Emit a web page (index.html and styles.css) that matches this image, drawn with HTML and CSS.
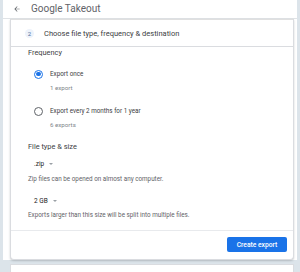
FILE: index.html
```html
<!DOCTYPE html>
<html lang="en">
<head>
  <meta charset="UTF-8" />
  <meta name="viewport" content="width=device-width, initial-scale=1.0"/>
  <title>Google Takeout</title>
  <link rel="stylesheet" href="styles.css">
</head>
<body>
  <div class="page">
    <header class="topbar">
      <svg class="back" viewBox="0 0 24 24" width="8" height="8"><path d="M20 11H7.83l5.59-5.59L12 4l-8 8 8 8 1.41-1.41L7.83 13H20v-2z" fill="#5f6368"/></svg>
      <h1>Google Takeout</h1>
    </header>

    <section class="card">
      <div class="step">
        <span class="step-num">2</span>
        <span class="step-title">Choose file type, frequency &amp; destination</span>
      </div>

      <div class="card-body">
        <h2>Frequency</h2>
        <div class="option">
          <span class="radio checked"></span>
          <div>
            <div class="opt-title">Export once</div>
            <div class="opt-sub">1 export</div>
          </div>
        </div>
        <div class="option">
          <span class="radio"></span>
          <div>
            <div class="opt-title">Export every 2 months for 1 year</div>
            <div class="opt-sub">6 exports</div>
          </div>
        </div>

        <h2 class="section-gap">File type &amp; size</h2>
        <div class="select">.zip <span class="caret"></span></div>
        <p class="hint">Zip files can be opened on almost any computer.</p>
        <div class="select select-gap">2 GB <span class="caret"></span></div>
        <p class="hint hint-tight">Exports larger than this size will be split into multiple files.</p>
      </div>

      <div class="actions">
        <button class="btn-primary">Create export</button>
      </div>
    </section>
  </div>

  <div class="next-card"></div>
</body>
</html>
```

FILE: styles.css
```css
body {
  margin: 0;
  font-family: Roboto, "Liberation Sans", Arial, sans-serif;
  background: #dce4ea;
  color: #3c4043;
  height: 272px;
  overflow: hidden;
}

.page {
  margin-left: 3px;
  width: 294px;
  background: #fff;
}

.topbar {
  display: flex;
  align-items: center;
  height: 19px;
  padding-left: 10px;
  border-bottom: 1px solid #e0e3e6;
  box-sizing: border-box;
}

.back {
  margin-right: 10px;
}

h1 {
  margin: 0;
  font-size: 10px;
  font-weight: 400;
  color: #5f6368;
  line-height: 12px;
}

.card {
  margin-left: 7px;
  width: 284px;
  box-sizing: border-box;
  border: 1px solid #dadce0;
  border-top: none;
  border-radius: 0 0 4px 4px;
  box-shadow: 0 1px 2px rgba(60, 64, 67, 0.25);
  background: #fff;
}

.step {
  display: flex;
  align-items: center;
  height: 28px;
  padding-left: 11px;
  border-top: 1px solid #e0e0e0;
  border-bottom: 1px solid #dadce0;
  box-sizing: border-box;
}

.step-num {
  width: 9px;
  height: 9px;
  border-radius: 50%;
  background: #eef3fb;
  color: #4b6d9c;
  font-size: 6px;
  line-height: 9px;
  text-align: center;
  margin-left: 3px;
  margin-right: 10px;
}

.step-title {
  font-size: 7.5px;
  color: #3c4043;
}

.card-body {
  padding: 0 0 10px 17px;
}

h2 {
  margin: 0;
  font-size: 7.4px;
  font-weight: 400;
  line-height: 12px;
  color: #3c4043;
}

.section-gap {
  margin-top: 11px;
}

.option {
  display: flex;
  align-items: flex-start;
  gap: 7px;
  margin-top: 10px;
  padding-left: 6px;
}

.option + .option {
  margin-top: 13px;
}

.radio {
  width: 9px;
  height: 9px;
  box-sizing: border-box;
  border: 1px solid #5f6368;
  border-radius: 50%;
  margin-top: 0.5px;
  display: flex;
  align-items: center;
  justify-content: center;
}

.radio.checked {
  border-color: #1a73e8;
}

.radio.checked::after {
  content: "";
  width: 4.5px;
  height: 4.5px;
  border-radius: 50%;
  background: #1a73e8;
}

.opt-title {
  font-size: 6.3px;
  line-height: 10px;
  color: #3c4043;
}

.opt-sub {
  font-size: 6.2px;
  line-height: 10px;
  margin-top: 4px;
  color: #80868b;
}

.select {
  display: flex;
  align-items: center;
  gap: 5px;
  margin: 6px 0 0 6px;
  font-size: 6.5px;
  line-height: 10px;
  color: #202124;
}

.select-gap {
  margin-top: 12px;
}

.caret {
  width: 0;
  height: 0;
  border-left: 2.5px solid transparent;
  border-right: 2.5px solid transparent;
  border-top: 2.5px solid #9aa0a6;
}

.hint {
  margin: 5px 0 0;
  font-size: 6.3px;
  line-height: 10px;
  color: #5f6368;
}

.hint-tight {
  margin-top: 4px;
}

.actions {
  display: flex;
  justify-content: flex-end;
  padding: 6px 6px 7px;
  border-top: 1px solid #e8eaed;
}

.btn-primary {
  width: 60px;
  height: 15px;
  padding: 0;
  border: none;
  border-radius: 2px;
  background: #1a73e8;
  color: #fff;
  font-family: Roboto, "Liberation Sans", Arial, sans-serif;
  font-size: 6.7px;
  font-weight: 500;
}

.next-card {
  margin: 4px 0 0 10px;
  width: 284px;
  height: 20px;
  box-sizing: border-box;
  border: 1px solid #dadce0;
  background: #fff;
}
```
